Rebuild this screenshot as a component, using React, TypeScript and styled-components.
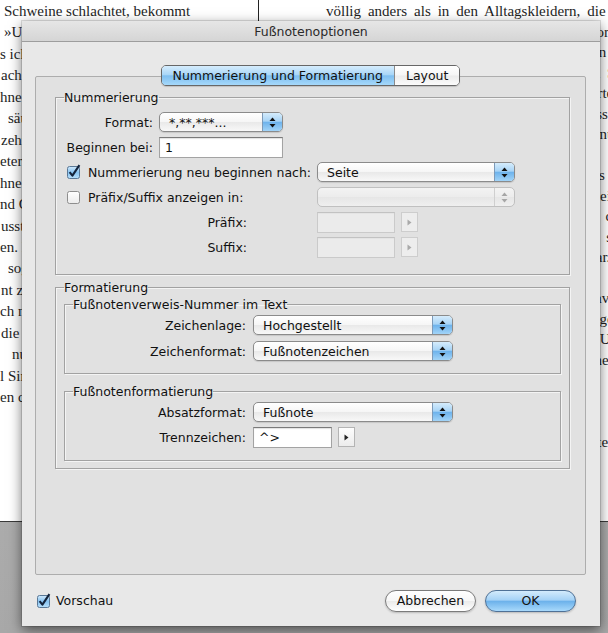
import React from 'react'
import styled, { createGlobalStyle } from 'styled-components'

const GlobalStyle = createGlobalStyle`
  html, body {
    margin: 0;
    padding: 0;
  }
  body {
    width: 608px;
    height: 633px;
    overflow: hidden;
    background: #b3b3b3;
  }
`

/* ---------- document behind the sheet ---------- */

const Desk = styled.div`
  position: relative;
  width: 608px;
  height: 633px;
  display: flex;
  flex-direction: column;
  background: linear-gradient(#bcbcbc, #a8a8a8);
  overflow: hidden;
`

const Spread = styled.div`
  height: 521px;
  flex: none;
  display: flex;
  background: #fff;
  border-bottom: 1px solid #3a3a3a;
  font-family: 'Liberation Serif', 'Times New Roman', serif;
  font-size: 15px;
  color: #1e1e1e;
`

const Column = styled.div<{ $lh: number; $left?: boolean }>`
  box-sizing: border-box;
  padding-top: 1px;
  line-height: ${(p) => p.$lh}px;
  overflow: hidden;
  ${(p) =>
    p.$left
      ? 'width: 259px; border-right: 1px solid #222;'
      : 'flex: 1; min-width: 0; padding-left: 67px; word-spacing: 3.2px;'}
`

const TextLine = styled.div<{ $shift?: number }>`
  white-space: pre;
  height: inherit;
  margin-left: ${(p) => p.$shift || 0}px;
`

const leftLines: [string, number][] = [
  ['Schweine schlachtet, bekommt', 4],
  ['»Und wenn du dann', 4],
  ['s ich mich recht erinnere,', 0],
  ['ach dem Schlachten stets', 1],
  ['hne Pause bis in den Abend', 0],
  ['säuberten die Frauen Därme', 8],
  ['zehn Würste auf einmal', 1],
  ['eter. Danach wurde gekocht', 0],
  ['hne Ende, und die Kinder', 0],
  ['nd Großeltern kamen dazu', 0],
  ['usste jeder mit anpacken', 1],
  ['en. Im Hof roch es nach', 0],
  ['sogar der Pfarrer', 8],
  ['nt zum Essen vorbei', 1],
  ['ch noch lange Jahre', 0],
  ['die Stube war voll', 1],
  ['num ging es los', 12],
  ['l Sinn für Feste', 0],
  ['en darauf gefreut', 0],
]

const rightLines: string[] = [
  'völlig anders als in den Alltagskleidern, die wir',
  'und die Mutter hatte es uns am frühen Morgen. Im',
  'Kessel dampfte es, und die Männer standen dann schon',
  'im Hof beisammen und tranken den ersten Schnaps, , ein',
  'wie es sich an solchen Tagen immer gehörte, c und',
  'am Abend wurde in der guten Stube gegessen, ch dort',
  'wo der große Tisch stand, den man sonst nur vor',
  '',
  'Wir Kinder durften lange wach bleiben, bis zum ö',
  'und wer wollte, bekam vom Fleisch noch einen G',
  'Teller voll, soviel er nur essen mochte, an dem',
  'ohne dass jemand darüber ein Wort verlor, sie',
  'verlor, wie viel schon gegessen worden war. «',
  '',
  'Später erzählte die Großmutter noch oft davon :',
  'und von den Wintern, die so ganz anders gewesen',
  'gewesen seien, als man es heute denke. · Und',
  'Und doch lachte sie dabei, als wäre es eine Zeit',
  '',
  '',
  '',
  'es eine Zeit, an die sie gern und oft dachte, le',
]

/* ---------- dialog ---------- */

const Sheet = styled.div`
  position: absolute;
  left: 22px;
  top: 21px;
  width: 578px;
  height: 605px;
  box-sizing: border-box;
  display: flex;
  flex-direction: column;
  background: #e8e8e8;
  box-shadow: 0 4px 12px rgba(0, 0, 0, 0.55), 0 0 0 1px rgba(0, 0, 0, 0.12);
  font-family: 'DejaVu Sans', 'Liberation Sans', sans-serif;
  font-size: 12.5px;
  color: #111;
`

const TitleBar = styled.div`
  height: 21px;
  flex: none;
  box-sizing: border-box;
  display: flex;
  align-items: center;
  justify-content: center;
  background: linear-gradient(#e6e6e6, #d5d5d5);
  border-bottom: 1px solid #9d9d9d;
  color: #2a2a2a;
`

const Body = styled.div`
  flex: 1;
  display: flex;
  flex-direction: column;
  padding: 23px 14px 0 13px;
`

const TabBar = styled.div`
  position: relative;
  z-index: 1;
  align-self: center;
  display: flex;
  height: 21px;
  box-sizing: border-box;
  margin-bottom: -10px;
  border: 1px solid #676767;
  border-radius: 5px;
  overflow: hidden;
  box-shadow: 0 1px 1px rgba(0, 0, 0, 0.15);
`

const Tab = styled.div<{ $active?: boolean }>`
  display: flex;
  align-items: center;
  padding: 0 11px;
  background: ${(p) =>
    p.$active
      ? 'linear-gradient(#d6edfd 0%, #a9d6f7 45%, #7fbff0 52%, #a5d8fa 100%)'
      : 'linear-gradient(#ffffff 0%, #f6f6f6 48%, #ebebeb 52%, #fbfbfb 100%)'};
  & + & {
    border-left: 1px solid #8a8a8a;
  }
`

const Panel = styled.div`
  flex: 1;
  box-sizing: border-box;
  border: 1px solid #adadad;
  border-radius: 2px;
  background: #e1e1e1;
  padding: 13px 15px 0 19px;
  display: flex;
  flex-direction: column;
`

const Group = styled.fieldset<{ $bottom: number; $gapTop?: number; $right?: number }>`
  margin: ${(p) => p.$gapTop || 0}px 0 0;
  min-width: 0;
  border: 1px solid #a2a2a2;
  box-shadow: 1px 1px 0 #f4f4f4, inset 1px 1px 0 #f4f4f4;
  padding: 0 ${(p) => p.$right || 0}px ${(p) => p.$bottom}px 8px;
`

const Legend = styled.legend`
  padding: 0;
  line-height: 15px;
  color: #111;
`

const Rows = styled.div<{ $top: number; $gap: number }>`
  display: flex;
  flex-direction: column;
  gap: ${(p) => p.$gap}px;
  padding-top: ${(p) => p.$top}px;
`

const Row = styled.div<{ $gap?: number }>`
  display: flex;
  align-items: center;
  height: 20px;
  gap: ${(p) => (p.$gap === undefined ? 6 : p.$gap)}px;
`

const Label = styled.div<{ $w: number }>`
  width: ${(p) => p.$w}px;
  flex: none;
  text-align: right;
  white-space: nowrap;
`

const CheckLabel = styled.label<{ $w?: number; $gap?: number; $left?: number }>`
  width: ${(p) => (p.$w ? `${p.$w}px` : 'auto')};
  flex: none;
  display: flex;
  align-items: center;
  gap: ${(p) => (p.$gap === undefined ? 7 : p.$gap)}px;
  padding-left: ${(p) => (p.$left === undefined ? 3 : p.$left)}px;
  box-sizing: border-box;
  white-space: nowrap;
  color: #111;
`

const Popup = styled.div<{ $w: number; $disabled?: boolean }>`
  width: ${(p) => p.$w}px;
  height: 20px;
  flex: none;
  box-sizing: border-box;
  display: flex;
  border: 1px solid ${(p) => (p.$disabled ? '#c0c0c0' : '#8b8b8b')};
  border-radius: 5px;
  overflow: hidden;
  background: ${(p) =>
    p.$disabled
      ? 'linear-gradient(#f3f3f3, #ececec 50%, #e6e6e6 52%, #efefef)'
      : 'linear-gradient(#ffffff, #f6f6f6 48%, #e9e9e9 52%, #f8f8f8)'};
  box-shadow: ${(p) => (p.$disabled ? 'none' : '0 1px 1px rgba(0, 0, 0, 0.12)')};
`

const PopupText = styled.div`
  flex: 1;
  display: flex;
  align-items: center;
  padding-left: 9px;
  white-space: nowrap;
  overflow: hidden;
`

const PopupCap = styled.div<{ $disabled?: boolean }>`
  width: 19px;
  flex: none;
  display: flex;
  align-items: center;
  justify-content: center;
  border-left: 1px solid ${(p) => (p.$disabled ? '#cfcfcf' : '#7d9ab8')};
  background: ${(p) =>
    p.$disabled
      ? 'transparent'
      : 'linear-gradient(#d5ecfc 0%, #a8d4f6 45%, #6eb3ec 52%, #a2d4f8 100%)'};
`

const TextField = styled.div<{ $w: number; $disabled?: boolean }>`
  width: ${(p) => p.$w}px;
  height: 21px;
  flex: none;
  box-sizing: border-box;
  display: flex;
  align-items: center;
  padding-left: 5px;
  background: ${(p) => (p.$disabled ? '#ebebeb' : '#fff')};
  border: 1px solid ${(p) => (p.$disabled ? '#cacaca' : '#a3a3a3')};
  border-top-color: ${(p) => (p.$disabled ? '#c2c2c2' : '#7a7a7a')};
  box-shadow: inset 0 1px 1px rgba(0, 0, 0, ${(p) => (p.$disabled ? 0.03 : 0.12)});
`

const FlyoutButton = styled.div<{ $disabled?: boolean }>`
  width: 17px;
  height: 20px;
  flex: none;
  box-sizing: border-box;
  display: flex;
  align-items: center;
  justify-content: center;
  border: 1px solid ${(p) => (p.$disabled ? '#cdcdcd' : '#b4b4b4')};
  background: ${(p) => (p.$disabled ? '#ededed' : 'linear-gradient(#fdfdfd, #ececec)')};
`

const Footer = styled.div`
  height: 51px;
  flex: none;
  display: flex;
  align-items: center;
  padding: 0 10px 0 0;
`

const Spacer = styled.div`
  flex: 1;
`

const PillButton = styled.div<{ $primary?: boolean }>`
  width: 91px;
  height: 22px;
  box-sizing: border-box;
  display: flex;
  align-items: center;
  justify-content: center;
  border-radius: 11px;
  border: 1px solid ${(p) => (p.$primary ? '#4f7196' : '#7b7b7b')};
  background: ${(p) =>
    p.$primary
      ? 'linear-gradient(#d3ebfc 0%, #a5d2f6 45%, #6db2eb 52%, #a8d9fb 100%)'
      : 'linear-gradient(#ffffff 0%, #f7f7f7 48%, #ebebeb 52%, #ffffff 100%)'};
  box-shadow: 0 1px 2px rgba(0, 0, 0, 0.2);
  & + & {
    margin-left: 9px;
  }
`

/* ---------- small drawn parts ---------- */

const UpDown = ({ dim }: { dim?: boolean }) => (
  <svg width="7" height="11" viewBox="0 0 7 11">
    <path d="M3.5 0.5 L6.5 4 L0.5 4 Z" fill={dim ? '#a6a6a6' : '#111'} />
    <path d="M3.5 10.5 L6.5 7 L0.5 7 Z" fill={dim ? '#a6a6a6' : '#111'} />
  </svg>
)

const RightTriangle = ({ dim }: { dim?: boolean }) => (
  <svg width="5" height="7" viewBox="0 0 5 7">
    <path d="M0.5 0.5 L4.5 3.5 L0.5 6.5 Z" fill={dim ? '#a9a9a9' : '#222'} />
  </svg>
)

const CheckBox = ({ checked }: { checked?: boolean }) => (
  <svg width="14" height="14" viewBox="0 0 14 14" style={{ overflow: 'visible', flex: 'none' }}>
    <defs>
      <linearGradient id="cb-on" x1="0" y1="0" x2="0" y2="1">
        <stop offset="0" stopColor="#d2eafc" />
        <stop offset="0.5" stopColor="#86c2f0" />
        <stop offset="1" stopColor="#b8e0fb" />
      </linearGradient>
      <linearGradient id="cb-off" x1="0" y1="0" x2="0" y2="1">
        <stop offset="0" stopColor="#ffffff" />
        <stop offset="1" stopColor="#ececec" />
      </linearGradient>
    </defs>
    <rect
      x="0.5"
      y="1.5"
      width="12"
      height="12"
      rx="2"
      fill={checked ? 'url(#cb-on)' : 'url(#cb-off)'}
      stroke={checked ? '#5a7896' : '#8e8e8e'}
    />
    {checked && (
      <path d="M2.6 7.2 L5.4 10.6 L12.4 0.2" fill="none" stroke="#14243c" strokeWidth="2.1" strokeLinejoin="round" />
    )}
  </svg>
)

const Select = ({ w, value, disabled }: { w: number; value?: string; disabled?: boolean }) => (
  <Popup $w={w} $disabled={disabled}>
    <PopupText>{value}</PopupText>
    <PopupCap $disabled={disabled}>
      <UpDown dim={disabled} />
    </PopupCap>
  </Popup>
)

/* ---------- page ---------- */

const App = () => (
  <>
    <GlobalStyle />
    <Desk>
      <Spread>
        <Column $lh={21.45} $left>
          {leftLines.map(([t, s], i) => (
            <TextLine key={i} $shift={s}>
              {t}
            </TextLine>
          ))}
        </Column>
        <Column $lh={20.5}>
          {rightLines.map((t, i) => (
            <TextLine key={i}>{t || ' '}</TextLine>
          ))}
        </Column>
      </Spread>

      <Sheet>
        <TitleBar>Fußnotenoptionen</TitleBar>
        <Body>
          <TabBar>
            <Tab $active>Nummerierung und Formatierung</Tab>
            <Tab>Layout</Tab>
          </TabBar>

          <Panel>
            <Group $bottom={17}>
              <Legend>Nummerierung</Legend>
              <Rows $top={7} $gap={5}>
                <Row>
                  <Label $w={89}>Format:</Label>
                  <Select w={124} value="*,**,***..." />
                </Row>
                <Row>
                  <Label $w={89}>Beginnen bei:</Label>
                  <TextField $w={124}>1</TextField>
                </Row>
                <Row>
                  <CheckLabel $w={247}>
                    <CheckBox checked />
                    Nummerierung neu beginnen nach:
                  </CheckLabel>
                  <Select w={198} value="Seite" />
                </Row>
                <Row>
                  <CheckLabel $w={247}>
                    <CheckBox />
                    Präfix/Suffix anzeigen in:
                  </CheckLabel>
                  <Select w={198} disabled />
                </Row>
                <Row $gap={70}>
                  <Label $w={183}>Präfix:</Label>
                  <Row>
                    <TextField $w={78} $disabled />
                    <FlyoutButton $disabled>
                      <RightTriangle dim />
                    </FlyoutButton>
                  </Row>
                </Row>
                <Row $gap={70}>
                  <Label $w={183}>Suffix:</Label>
                  <Row>
                    <TextField $w={78} $disabled />
                    <FlyoutButton $disabled>
                      <RightTriangle dim />
                    </FlyoutButton>
                  </Row>
                </Row>
              </Rows>
            </Group>

            <Group $bottom={7} $gapTop={5} $right={8}>
              <Legend>Formatierung</Legend>
              <Rows $top={2} $gap={10}>
                <Group $bottom={12}>
                  <Legend>Fußnotenverweis-Nummer im Text</Legend>
                  <Rows $top={3} $gap={6}>
                    <Row $gap={7}>
                      <Label $w={173}>Zeichenlage:</Label>
                      <Select w={200} value="Hochgestellt" />
                    </Row>
                    <Row $gap={7}>
                      <Label $w={173}>Zeichenformat:</Label>
                      <Select w={200} value="Fußnotenzeichen" />
                    </Row>
                  </Rows>
                </Group>
                <Group $bottom={13}>
                  <Legend>Fußnotenformatierung</Legend>
                  <Rows $top={3} $gap={5}>
                    <Row $gap={7}>
                      <Label $w={173}>Absatzformat:</Label>
                      <Select w={200} value="Fußnote" />
                    </Row>
                    <Row $gap={7}>
                      <Label $w={173}>Trennzeichen:</Label>
                      <Row>
                        <TextField $w={79}>^&gt;</TextField>
                        <FlyoutButton>
                          <RightTriangle />
                        </FlyoutButton>
                      </Row>
                    </Row>
                  </Rows>
                </Group>
              </Rows>
            </Group>
          </Panel>

          <Footer>
            <CheckLabel $left={2} $gap={5}>
              <CheckBox checked />
              Vorschau
            </CheckLabel>
            <Spacer />
            <PillButton>Abbrechen</PillButton>
            <PillButton $primary>OK</PillButton>
          </Footer>
        </Body>
      </Sheet>
    </Desk>
  </>
)

export default App
